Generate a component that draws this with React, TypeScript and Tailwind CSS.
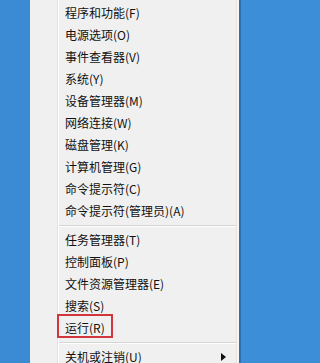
import React from 'react';

const groupOne = [
  '程序和功能(F)',
  '电源选项(O)',
  '事件查看器(V)',
  '系统(Y)',
  '设备管理器(M)',
  '网络连接(W)',
  '磁盘管理(K)',
  '计算机管理(G)',
  '命令提示符(C)',
  '命令提示符(管理员)(A)',
];

const groupTwo = ['任务管理器(T)', '控制面板(P)', '文件资源管理器(E)', '搜索(S)', '运行(R)'];

const MenuItem: React.FC<{ label: string; arrow?: boolean }> = ({ label, arrow }) => (
  <div className="h-[22px] flex items-center pl-[6px] pr-[8px] text-[12px] text-[#111] whitespace-nowrap">
    <span className="flex-1">{label}</span>
    {arrow && (
      <svg width="5" height="8" viewBox="0 0 5 8" className="mr-[2px]">
        <path d="M0 0 L5 4 L0 8 Z" fill="#111" />
      </svg>
    )}
  </div>
);

const Separator = () => (
  <div className="h-[7px] flex flex-col justify-center">
    <div className="h-px bg-[#d5d5d5]" />
    <div className="h-px bg-white" />
  </div>
);

export default function App() {
  return (
    <div className="w-full min-w-[256px] h-[363px] bg-[#3c8ed8] flex overflow-hidden">
      <div className="w-[30px] shrink-0 bg-[#3a8bd4]" />
      <div className="w-[209px] shrink-0 bg-[#f0f0f0] flex relative">
        {/* Icon column */}
        <div className="w-[28px] shrink-0 border-r border-[#e0e0e0]" />
        <div className="w-px bg-white" />
        <div className="flex-1 pt-[2px]" style={{ fontFamily: '"Noto Sans CJK SC", sans-serif' }}>
          {groupOne.map((label) => (
            <MenuItem key={label} label={label} />
          ))}
          <Separator />
          {groupTwo.map((label) => (
            <MenuItem key={label} label={label} />
          ))}
          <Separator />
          <MenuItem label="关机或注销(U)" arrow />
        </div>
        <div className="w-[3px] shrink-0 bg-[#f8f5f2] border-l border-[#e6e2de]" />
        {/* Highlight around 运行 */}
        <div className="absolute left-[27px] top-[314px] w-[56px] h-[24px] border-2 border-[#d3353c]" />
      </div>
      <div className="w-[2px] shrink-0 bg-[#2d70b2]" />
      <div className="flex-1 bg-[#3c8ed8]" />
    </div>
  );
}
